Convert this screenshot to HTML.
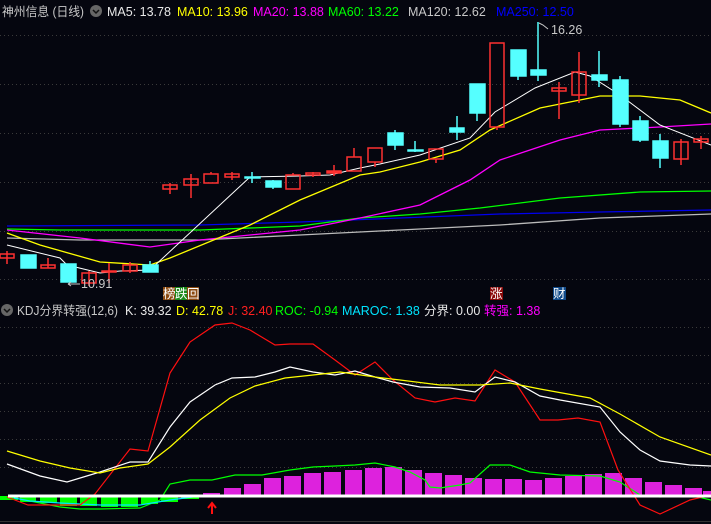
<!DOCTYPE html><html><head><meta charset="utf-8"><style>
body{margin:0;background:#05060f;width:711px;height:524px;overflow:hidden}
svg{display:block}
text{font-family:"Liberation Sans","Noto Sans CJK SC",sans-serif;font-size:12.5px}
</style></head><body>
<svg width="711" height="524" viewBox="0 0 711 524">
<rect width="711" height="524" fill="#05060f"/>
<g stroke="#3a3a3a" stroke-dasharray="1,3" stroke-width="1">
<line x1="0" y1="35.5" x2="711" y2="35.5"/><line x1="0" y1="84.5" x2="711" y2="84.5"/><line x1="0" y1="133.5" x2="711" y2="133.5"/><line x1="0" y1="182.5" x2="711" y2="182.5"/><line x1="0" y1="231.5" x2="711" y2="231.5"/><line x1="0" y1="279.5" x2="711" y2="279.5"/>
<line x1="0" y1="327.5" x2="711" y2="327.5"/><line x1="0" y1="355.5" x2="711" y2="355.5"/><line x1="0" y1="383.5" x2="711" y2="383.5"/><line x1="0" y1="411.5" x2="711" y2="411.5"/><line x1="0" y1="439.5" x2="711" y2="439.5"/><line x1="0" y1="467.5" x2="711" y2="467.5"/>
</g>
<line x1="0" y1="521.5" x2="711" y2="521.5" stroke="#333" stroke-width="1"/>
<!-- header -->
<text x="2" y="16" fill="#c8c8c8" textLength="82" lengthAdjust="spacingAndGlyphs">神州信息 (日线)</text>
<circle cx="96" cy="11" r="6" fill="#666"/><path d="M93 10l3 3 3-3" stroke="#111" stroke-width="1.5" fill="none"/>
<text x="107" y="16" fill="#e8e8e8">MA5: 13.78</text>
<text x="177" y="16" fill="#ffff00">MA10: 13.96</text>
<text x="253" y="16" fill="#ff00ff">MA20: 13.88</text>
<text x="328" y="16" fill="#00ff00">MA60: 13.22</text>
<text x="408" y="16" fill="#c8c8c8">MA120: 12.62</text>
<text x="496" y="16" fill="#0000ff">MA250: 12.50</text>
<!-- MA lines -->
<g fill="none" stroke-width="1.3">
<polyline stroke="#0000ee" points="7,226 200,225 300,222 400,218 500,214 600,212 711,210"/>
<polyline stroke="#bbbbbb" points="7,238 80,240 200,240 300,235 400,230 500,225 600,218 711,214"/>
<polyline stroke="#00ff00" points="7,229 60,230 200,230 300,226 360,218 420,214 480,208 560,198 640,192 711,191"/>
<polyline stroke="#ff00ff" points="7,230 80,238 150,247 200,240 250,235 300,230 360,218 420,205 470,180 500,160 560,140 600,130 660,127 711,124"/>
<polyline stroke="#ffff00" points="7,233 40,245 100,262 150,265 170,258 250,225 300,200 360,175 380,172 420,162 460,150 490,130 540,108 600,96 640,96 680,100 711,113"/>
<polyline stroke="#ffffff" stroke-width="1" points="7,245 60,258 67,265 100,273 120,271 150,270 250,177 300,176 330,175 360,168 380,164 420,155 470,138 495,112 535,88 575,72 590,76 620,95 660,125 711,145"/>
</g>
<!-- candles -->
<g stroke-width="1.5">
<g stroke="#ff3030" fill="none">
<line x1="7" y1="251" x2="7" y2="264"/><rect x="0" y="254" width="14" height="4"/>
<line x1="48" y1="258" x2="48" y2="268"/><rect x="41" y="265" width="14" height="3"/>
<line x1="89" y1="271" x2="89" y2="286"/><rect x="82" y="273" width="14" height="10"/>
<line x1="109" y1="263" x2="109" y2="283"/><rect x="102" y="271" width="14" height="1"/>
<line x1="130" y1="262" x2="130" y2="273"/><rect x="123" y="265" width="14" height="6"/>
<line x1="170" y1="183" x2="170" y2="194"/><rect x="163" y="185" width="14" height="4"/>
<line x1="191" y1="174" x2="191" y2="198"/><rect x="184" y="179" width="14" height="6"/>
<line x1="211" y1="172" x2="211" y2="174"/><rect x="204" y="174" width="14" height="9"/>
<line x1="232" y1="172" x2="232" y2="180"/><rect x="225" y="174" width="14" height="3"/>
<line x1="293" y1="173" x2="293" y2="175"/><rect x="286" y="175" width="14" height="14"/>
<line x1="313" y1="172" x2="313" y2="177"/><rect x="306" y="173" width="14" height="2"/>
<line x1="334" y1="165" x2="334" y2="176"/><rect x="327" y="171" width="14" height="2" fill="#ff3030"/>
<line x1="354" y1="148" x2="354" y2="157"/><rect x="347" y="157" width="14" height="14"/>
<line x1="375" y1="162" x2="375" y2="167"/><rect x="368" y="148" width="14" height="14"/>
<line x1="436" y1="159" x2="436" y2="163"/><rect x="429" y="149" width="14" height="10"/>
<line x1="497" y1="127" x2="497" y2="130"/><rect x="490" y="43" width="14" height="84"/>
<line x1="559" y1="82" x2="559" y2="119"/><rect x="552" y="88" width="14" height="3"/>
<line x1="579" y1="52" x2="579" y2="103"/><rect x="572" y="72" width="14" height="23"/>
<line x1="681" y1="139" x2="681" y2="165"/><rect x="674" y="142" width="14" height="17"/>
<line x1="701" y1="136" x2="701" y2="149"/><rect x="694" y="139" width="14" height="3"/>
</g>
<g stroke="#55ffff" fill="#55ffff">
<rect x="21" y="255" width="15" height="13"/>
<rect x="61" y="264" width="15" height="18"/>
<line x1="150" y1="261" x2="150" y2="272"/><rect x="143" y="265" width="15" height="7"/>
<line x1="252" y1="172" x2="252" y2="183"/><rect x="245" y="177" width="15" height="1"/>
<line x1="273" y1="180" x2="273" y2="189"/><rect x="266" y="181" width="15" height="6"/>
<line x1="395" y1="130" x2="395" y2="150"/><rect x="388" y="133" width="15" height="12"/>
<line x1="415" y1="141" x2="415" y2="152"/><rect x="408" y="150" width="15" height="1"/>
<line x1="457" y1="116" x2="457" y2="140"/><rect x="450" y="128" width="14" height="4"/>
<line x1="477" y1="113" x2="477" y2="121"/><rect x="470" y="84" width="15" height="29"/>
<line x1="518" y1="76" x2="518" y2="80"/><rect x="511" y="50" width="15" height="26"/>
<line x1="538" y1="22" x2="538" y2="81"/><rect x="531" y="70" width="15" height="5"/>
<line x1="599" y1="51" x2="599" y2="87"/><rect x="592" y="75" width="15" height="5"/>
<line x1="620" y1="76" x2="620" y2="127"/><rect x="613" y="80" width="15" height="44"/>
<line x1="640" y1="116" x2="640" y2="142"/><rect x="633" y="121" width="15" height="19"/>
<line x1="660" y1="134" x2="660" y2="168"/><rect x="653" y="141" width="15" height="17"/>
</g>
</g>
<text x="551" y="34" fill="#c8c8c8">16.26</text>
<path d="M539 23l4 2 5 4" stroke="#c8c8c8" fill="none"/>
<text x="81" y="288" fill="#c8c8c8">10.91</text>
<path d="M68 284h12M68 284l3-2M68 284l3 2" stroke="#c8c8c8" fill="none"/>
<!-- markers -->
<rect x="163" y="287" width="12" height="13" fill="#8b4a10"/><text x="163" y="298" fill="#fff" font-size="12">榜</text>
<rect x="175" y="287" width="12" height="13" fill="#1a8a1a"/><text x="175" y="298" fill="#fff" font-size="12">跌</text>
<rect x="187" y="287" width="12" height="13" fill="#8b4a10"/><text x="187" y="298" fill="#fff" font-size="12">回</text>
<rect x="490" y="287" width="13" height="13" fill="#8a0a0a"/><text x="490" y="298" fill="#fff" font-size="12">涨</text>
<rect x="553" y="287" width="13" height="13" fill="#104a8a"/><text x="553" y="298" fill="#fff" font-size="12">财</text>
<!-- lower header -->
<circle cx="7" cy="310" r="6" fill="#666"/><path d="M4 309l3 3 3-3" stroke="#111" stroke-width="1.5" fill="none"/>
<text x="17" y="315" fill="#c8c8c8" textLength="101" lengthAdjust="spacingAndGlyphs">KDJ分界转强(12,6)</text>
<text x="125" y="315" fill="#e8e8e8">K: 39.32</text>
<text x="176" y="315" fill="#ffff00">D: 42.78</text>
<text x="228" y="315" fill="#ff2020">J: 32.40</text>
<text x="275" y="315" fill="#00ff00">ROC: -0.94</text>
<text x="342" y="315" fill="#00e5ff">MAROC: 1.38</text>
<text x="424" y="315" fill="#e8e8e8">分界: 0.00</text>
<text x="484" y="315" fill="#ff00ff">转强: 1.38</text>
<!-- bars -->
<g fill="#dd22dd">
<rect x="203" y="493" width="17" height="3"/><rect x="224" y="488" width="17" height="8"/><rect x="244" y="484" width="17" height="12"/><rect x="264" y="478" width="17" height="18"/><rect x="284" y="476" width="17" height="20"/><rect x="304" y="473" width="17" height="23"/><rect x="324" y="472" width="17" height="24"/><rect x="345" y="470" width="17" height="26"/><rect x="365" y="468" width="17" height="28"/><rect x="385" y="467" width="17" height="29"/><rect x="405" y="470" width="17" height="26"/><rect x="425" y="473" width="17" height="23"/><rect x="445" y="475" width="17" height="21"/><rect x="465" y="478" width="17" height="18"/><rect x="485" y="479" width="17" height="17"/><rect x="505" y="479" width="17" height="17"/><rect x="525" y="480" width="17" height="16"/><rect x="545" y="478" width="17" height="18"/><rect x="565" y="476" width="17" height="20"/><rect x="585" y="474" width="17" height="22"/><rect x="605" y="473" width="17" height="23"/><rect x="625" y="478" width="17" height="18"/><rect x="645" y="482" width="17" height="14"/><rect x="665" y="485" width="17" height="11"/><rect x="685" y="488" width="17" height="8"/><rect x="703" y="491" width="8" height="5"/>
</g>
<g fill="#00ff00">
<rect x="0" y="496" width="18" height="4"/><rect x="20" y="496" width="16" height="6"/><rect x="40" y="496" width="17" height="7"/><rect x="60" y="496" width="17" height="10"/><rect x="80" y="496" width="17" height="10"/><rect x="101" y="496" width="17" height="11"/><rect x="121" y="496" width="17" height="11"/><rect x="141" y="496" width="17" height="8"/><rect x="161" y="496" width="17" height="6"/><rect x="181" y="496" width="18" height="3"/>
</g>
<g fill="none" stroke-width="1.2">
<polyline stroke="#00ff00" points="7,498 20,499 60,507 80,509 100,509 140,508 160,500 170,484 190,480 212,480 235,475 262,475 290,470 313,467 335,466 355,465 375,463 395,467 410,472 425,480 430,487 440,488 460,485 470,483 490,465 510,465 530,472 560,475 600,476 620,482 640,495 660,497 690,495 711,500"/>
<polyline stroke="#00e5ff" points="14,498 30,501 60,503 100,505 140,505 170,500 200,496"/>
<polyline stroke="#ff1010" points="7,497 20,502 28,505 60,505 80,505 95,494 130,449 148,451 170,373 190,342 215,325 232,323 250,330 275,345 290,344 313,344 335,360 355,375 375,362 393,380 415,398 435,402 455,398 475,401 495,370 515,382 540,420 558,420 578,418 600,422 618,470 640,505 660,514 690,500 711,495"/>
<polyline stroke="#ffffff" points="7,464 40,476 67,482 100,472 130,462 148,462 170,427 190,402 215,385 232,378 255,377 275,372 290,367 313,372 335,375 355,371 375,377 393,382 420,387 450,388 475,392 495,377 515,382 540,396 560,400 600,407 620,432 640,450 660,461 690,465 711,466"/>
<polyline stroke="#ffff00" points="7,451 40,461 70,468 100,473 120,468 148,464 170,447 200,420 230,398 255,386 285,378 313,375 340,372 375,377 400,380 440,385 480,385 510,383 540,389 590,398 620,414 660,437 711,455"/>
</g>
<rect x="8" y="494.5" width="703" height="3" fill="#ffffff"/>
<path d="M212 504v10M208 508l4-5 4 5" stroke="#ff1010" stroke-width="2" fill="none"/>
</svg>
</body></html>
